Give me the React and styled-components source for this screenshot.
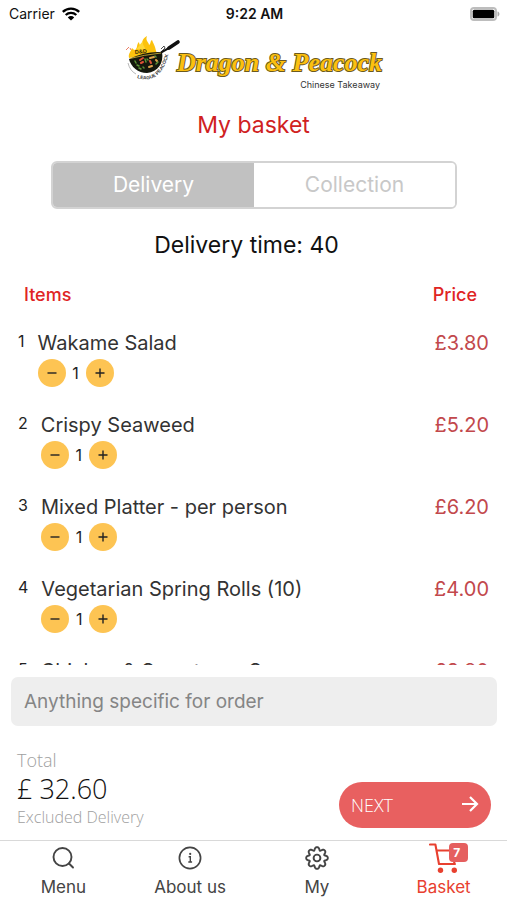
import React, { useState } from "react";
import styled, { createGlobalStyle } from "styled-components";

const GlobalStyle = createGlobalStyle`
  *, *::before, *::after { box-sizing: border-box; }
  body { margin: 0; background: #fff; }
  button, input { font: inherit; color: inherit; }
  button { border: 0; background: none; padding: 0; cursor: pointer; }
`;

const Screen = styled.div`
  display: flex;
  flex-direction: column;
  height: 100vh;
  font-family: Inter, "Liberation Sans", sans-serif;
  color: #333;
  background: #fff;
`;

const StatusBar = styled.div`
  display: grid;
  grid-template-columns: 1fr auto 1fr;
  align-items: center;
  height: 28px;
  padding: 0 7px 0 9px;
  font-size: 14px;
  line-height: 20px;
  color: #111;
`;

const Carrier = styled.span`
  display: flex;
  align-items: center;
  gap: 7px;
`;

const Clock = styled.span`
  font-weight: 600;
`;

const BatterySlot = styled.span`
  display: flex;
  justify-content: flex-end;
`;

const Brand = styled.header`
  display: flex;
  justify-content: center;
  align-items: flex-start;
  padding-top: 8px;
  height: 68px;
`;

const BrandText = styled.div`
  display: flex;
  flex-direction: column;
  align-items: flex-end;
  padding-top: 11px;
  margin-left: -6px;
`;

const BrandName = styled.span`
  font-family: "Liberation Serif", serif;
  font-size: 26px;
  line-height: 32px;
  font-weight: 700;
  font-style: italic;
  color: #fcc010;
  -webkit-text-stroke: 2px #6b5a20;
  paint-order: stroke fill;
`;

const BrandTag = styled.span`
  font-size: 9px;
  line-height: 12px;
  padding-right: 2px;
  color: #333;
`;

const Title = styled.h1`
  margin: 13px 0 0;
  font-size: 23px;
  line-height: 32px;
  font-weight: 400;
  text-align: center;
  color: #d0211f;
`;

const Segmented = styled.div`
  display: flex;
  margin: 20px 50px 0 51px;
  height: 48px;
  border: 2px solid #d3d3d3;
  border-radius: 6px;
  overflow: hidden;
`;

const Segment = styled.button`
  flex: 1;
  font-size: 21px;
  line-height: 28px;
  color: ${(p) => (p.$active ? "#fff" : "#c8c8c8")};
  background: ${(p) => (p.$active ? "#c1c1c1" : "#fff")};
`;

const DeliveryTime = styled.p`
  margin: 20px 0 14px;
  padding-right: 14px;
  font-size: 23px;
  line-height: 32px;
  text-align: center;
  color: #111;
`;

const BasketScroll = styled.div`
  flex: 1;
  min-height: 0;
  overflow-y: auto;
  scrollbar-width: none;
`;

const BasketTable = styled.table`
  width: 100%;
  border-collapse: collapse;
`;

const HeadCell = styled.th`
  position: sticky;
  top: 0;
  height: 40px;
  padding: 0 30px 0 24px;
  background: #fff;
  font-size: 18px;
  line-height: 24px;
  font-weight: 500;
  text-align: ${(p) => (p.$end ? "right" : "left")};
  color: #e02424;
`;

const Cell = styled.td`
  height: 82px;
  padding: 16px 18px 0;
  vertical-align: top;
  text-align: ${(p) => (p.$end ? "right" : "left")};
  font-size: 20px;
  line-height: 24px;
  color: ${(p) => (p.$end ? "#c2484c" : "#333")};
`;

const Item = styled.div`
  display: flex;
  gap: 13px;
`;

const ItemNumber = styled.span`
  font-size: 16px;
  line-height: 20px;
  color: #222;
`;

const Stepper = styled.div`
  display: flex;
  align-items: center;
  gap: 6px;
  padding-top: 4px;
`;

const StepButton = styled.button`
  display: grid;
  place-items: center;
  width: 28px;
  height: 28px;
  border-radius: 50%;
  background: #fdc453;
`;

const Quantity = styled.span`
  width: 8px;
  display: flex;
  justify-content: center;
  font-size: 16px;
  line-height: 20px;
  color: #222;
`;

const NoteInput = styled.input`
  flex: none;
  margin: 12px 10px 0 11px;
  height: 49px;
  padding: 0 13px;
  border: 0;
  border-radius: 7px;
  background: #eee;
  font-size: 19px;
  line-height: 24px;
  &::placeholder { color: #858585; opacity: 1; }
`;

const Summary = styled.section`
  display: flex;
  justify-content: space-between;
  align-items: flex-end;
  padding: 22px 16px 12px 17px;
  font-family: "Open Sans", "Noto Sans", sans-serif;
  font-weight: 300;
`;

const Totals = styled.div`
  display: flex;
  flex-direction: column;
`;

const SummaryLabel = styled.span`
  font-size: ${(p) => (p.$small ? 16 : 18)}px;
  line-height: ${(p) => (p.$small ? 22 : 24)}px;
  color: #a0a0a0;
`;

const Amount = styled.span`
  font-size: 27px;
  line-height: 34px;
  color: #111;
`;

const NextButton = styled.button`
  display: flex;
  align-items: center;
  justify-content: space-between;
  width: 152px;
  height: 46px;
  padding: 0 12px;
  border-radius: 23px;
  background: #e86060;
  color: #fff;
  font-size: 18px;
`;

const TabBar = styled.nav`
  display: grid;
  grid-template-columns: repeat(4, 1fr);
  height: 60px;
  flex: none;
  border-top: 1px solid #d9d9d9;
`;

const Tab = styled.a`
  display: flex;
  flex-direction: column;
  align-items: center;
  text-decoration: none;
  font-size: 17px;
  line-height: 24px;
  color: ${(p) => (p.$active ? "#e8402f" : "#444")};
`;

const TabIcon = styled.span`
  position: relative;
  display: grid;
  place-items: center;
  height: 34px;
`;

const Badge = styled.span`
  position: absolute;
  top: 2px;
  right: -9px;
  width: 19px;
  height: 19px;
  padding-right: 3px;
  border-radius: 4px;
  background: #e55f5f;
  color: #fff;
  font-size: 12px;
  line-height: 19px;
  font-weight: 700;
  text-align: center;
`;

const WifiIcon = () => (
  <svg width="18" height="14" viewBox="0 0 18 14" fill="none" stroke="#000" strokeWidth="2.3" aria-hidden="true">
    <path d="M.8 4.9a11.8 11.8 0 0 1 16.4 0M3.7 8a7.7 7.7 0 0 1 10.6 0" />
    <path d="M9 13.6 5.8 10.4a4.5 4.5 0 0 1 6.4 0z" fill="#000" stroke="none" />
  </svg>
);

const BatteryIcon = () => (
  <svg width="30" height="14" viewBox="0 0 30 14" role="img" aria-label="Battery full">
    <rect x="1" y="1" width="25" height="12" rx="3" fill="#fff" stroke="#bdbdbd" strokeWidth="2" />
    <rect x="2.700" y="2.700" width="21.600" height="8.600" rx="1.500" fill="#000" />
    <path d="M27.500 4.500c2.600.6 2.600 4.400 0 5z" fill="#aaa" />
  </svg>
);

const WokLogo = () => (
  <svg width="58" height="50" viewBox="0 0 58 50" aria-hidden="true">
    <path d="M4 22C3 17 6 16 7 12c1 1 2 2 3 2 3-2 1-5 4-8 0 2 1 3 2 4 2-3 0-7 6-10-2 5 2 6 2 9 2-1 1-4 3-5 1 3 3 5 4 11l1 2z" fill="#fcc20e" />
    <path d="M11 13c3-2 3-4 7-8-1 5 3 6 2 9z" fill="#ffd736" />
    <path d="m1 14 3-3M5 12l1 2" stroke="#e75d3f" strokeWidth=".8" />
    <path d="M4 23Q20 15 37 16c2 11-4 20-15 21C13 37 6 31 4 23z" fill="#14170d" />
    <path d="M5 22.500Q18 19 36 17" fill="none" stroke="#d8b73a" strokeWidth=".8" />
    <path d="M36 16.500 46 11l7-5" fill="none" stroke="#111" strokeWidth="2" />
    <path d="m44 12 9-6" stroke="#111" strokeWidth="3.600" strokeLinecap="round" />
    <path d="m36 13 3-3 1 2-3 3" fill="none" stroke="#222" strokeWidth=".8" />
    <g fill="none" strokeWidth="2" strokeLinecap="round">
      <path d="m15 24 3-2m-2 5 2-1m7-1 1 2" stroke="#df5036" />
      <path d="m25 22 4-1m-5 10 3-1m4-6 1 1" stroke="#dda34c" />
      <path d="m10 25 1 2m1 2 2 1m6-7 1 3m-3 5 1 1m12-4 2-2m-3-6 1 1m-9 2 1 1m-9 8 2 1" stroke="#5b9135" strokeWidth="1.500" />
    </g>
    <path d="M3 27q2 8 8 11" fill="none" stroke="#888" strokeWidth=".6" />
    <defs><path id="wokRim" d="M12 42Q35 49 43 20" /></defs>
    <text fontFamily="Liberation Sans, sans-serif" fontSize="4.800" fontWeight="700" fill="#333">
      <textPath href="#wokRim">LEAGUE PEACOCK</textPath>
    </text>
    <text x="10" y="18" transform="rotate(-6 10 18)" fontFamily="Liberation Sans, sans-serif" fontSize="5.500" fontWeight="700" fill="#342b08">D&amp;D</text>
  </svg>
);

const SearchIcon = () => (
  <svg width="24" height="24" viewBox="0 0 24 24" fill="none" stroke="currentColor" strokeWidth="1.900" strokeLinecap="round" aria-hidden="true">
    <circle cx="11.500" cy="11" r="9" />
    <path d="m18 17.500 4 4" />
  </svg>
);

const InfoIcon = () => (
  <svg width="24" height="24" viewBox="0 0 24 24" fill="none" stroke="currentColor" strokeWidth="1.700" aria-hidden="true">
    <circle cx="12" cy="12" r="10.600" />
    <path d="M10.600 10.800h1.700v5M10.300 16h3.800" strokeWidth="1.400" />
    <circle cx="12.200" cy="7.900" r="1.100" fill="currentColor" stroke="none" />
  </svg>
);

const gearOutline =
  Array.from({ length: 128 }, (_, i) => {
    const angle = (i / 128) * Math.PI * 2;
    const wave = Math.cos(angle * 8);
    const radius = 9.6 + 1.5 * wave - 0.3 * Math.cos(angle * 16);
    const x = 13 + radius * Math.sin(angle);
    const y = 13 - radius * Math.cos(angle);
    return `${i ? "L" : "M"}${x.toFixed(2)} ${y.toFixed(2)}`;
  }).join("") + "z";

const GearIcon = () => (
  <svg width="26" height="26" viewBox="0 0 26 26" fill="none" stroke="currentColor" strokeWidth="1.900" strokeLinejoin="round" aria-hidden="true">
    <path d={gearOutline} />
    <circle cx="13" cy="13" r="3.400" />
  </svg>
);

const CartIcon = () => (
  <svg width="30" height="32" viewBox="0 0 30 32" fill="none" stroke="currentColor" strokeWidth="2.100" strokeLinecap="round" strokeLinejoin="round" aria-hidden="true">
    <path d="M1 2.500h5.400L10 22h16M7.500 8.500h20L25 22" />
    <circle cx="11.500" cy="28.300" r="2.700" fill="currentColor" stroke="none" />
    <circle cx="25.300" cy="28.300" r="2.700" fill="currentColor" stroke="none" />
  </svg>
);

const StepIcon = ({ plus }) => (
  <svg width="12" height="12" viewBox="0 0 12 12" stroke="#222" strokeWidth="1.400" aria-hidden="true">
    <path d={plus ? "M1.500 6h9M6 1.500v9" : "M1.500 6h9"} />
  </svg>
);

const ArrowIcon = () => (
  <svg width="18" height="18" viewBox="0 0 18 18" fill="none" stroke="currentColor" strokeWidth="2.200" aria-hidden="true">
    <path d="M1 8h15M9 1l7 7-7 7" />
  </svg>
);

const startItems = [
  { name: "Wakame Salad", price: "£3.80", qty: 1 },
  { name: "Crispy Seaweed", price: "£5.20", qty: 1 },
  { name: "Mixed Platter - per person", price: "£6.20", qty: 1 },
  { name: "Vegetarian Spring Rolls (10)", price: "£4.00", qty: 1 },
  { name: "Chicken & Sweetcorn Soup", price: "£3.80", qty: 1 },
];

const tabs = [
  { label: "Menu", icon: <SearchIcon /> },
  { label: "About us", icon: <InfoIcon /> },
  { label: "My", icon: <GearIcon /> },
  { label: "Basket", icon: <CartIcon />, badge: 7 },
];

export default function App() {
  const [mode, setMode] = useState("Delivery");
  const [items, setItems] = useState(startItems);

  const step = (index, by) =>
    setItems((list) =>
      list.map((it, i) => (i === index ? { ...it, qty: Math.max(0, it.qty + by) } : it))
    );

  return (
    <Screen>
      <GlobalStyle />
      <StatusBar>
        <Carrier>Carrier <WifiIcon /></Carrier>
        <Clock>9:22 AM</Clock>
        <BatterySlot><BatteryIcon /></BatterySlot>
      </StatusBar>
      <Brand>
        <WokLogo />
        <BrandText>
          <BrandName>Dragon &amp; Peacock</BrandName>
          <BrandTag>Chinese Takeaway</BrandTag>
        </BrandText>
      </Brand>
      <Title>My basket</Title>
      <Segmented role="group" aria-label="Order type">
        {["Delivery", "Collection"].map((m) => (
          <Segment key={m} $active={mode === m} aria-pressed={mode === m} onClick={() => setMode(m)}>
            {m}
          </Segment>
        ))}
      </Segmented>
      <DeliveryTime>Delivery time: 40</DeliveryTime>
      <BasketScroll>
        <BasketTable>
          <thead>
            <tr>
              <HeadCell scope="col">Items</HeadCell>
              <HeadCell scope="col" $end>Price</HeadCell>
            </tr>
          </thead>
          <tbody>
            {items.map((it, i) => (
              <tr key={it.name}>
                <Cell>
                  <Item>
                    <ItemNumber>{i + 1}</ItemNumber>
                    <div>
                      {it.name}
                      <Stepper>
                        <StepButton aria-label={`Remove one ${it.name}`} onClick={() => step(i, -1)}><StepIcon /></StepButton>
                        <Quantity>{it.qty}</Quantity>
                        <StepButton aria-label={`Add one ${it.name}`} onClick={() => step(i, 1)}><StepIcon plus /></StepButton>
                      </Stepper>
                    </div>
                  </Item>
                </Cell>
                <Cell $end>{it.price}</Cell>
              </tr>
            ))}
          </tbody>
        </BasketTable>
      </BasketScroll>
      <NoteInput aria-label="Order note" placeholder="Anything specific for order" />
      <Summary>
        <Totals>
          <SummaryLabel>Total</SummaryLabel>
          <Amount>£ 32.60</Amount>
          <SummaryLabel $small>Excluded Delivery</SummaryLabel>
        </Totals>
        <NextButton>NEXT <ArrowIcon /></NextButton>
      </Summary>
      <TabBar>
        {tabs.map((t) => (
          <Tab key={t.label} href={`#${t.label}`} $active={t.label === "Basket"}>
            <TabIcon>
              {t.icon}
              {t.badge && <Badge>{t.badge}</Badge>}
            </TabIcon>
            {t.label}
          </Tab>
        ))}
      </TabBar>
    </Screen>
  );
}
